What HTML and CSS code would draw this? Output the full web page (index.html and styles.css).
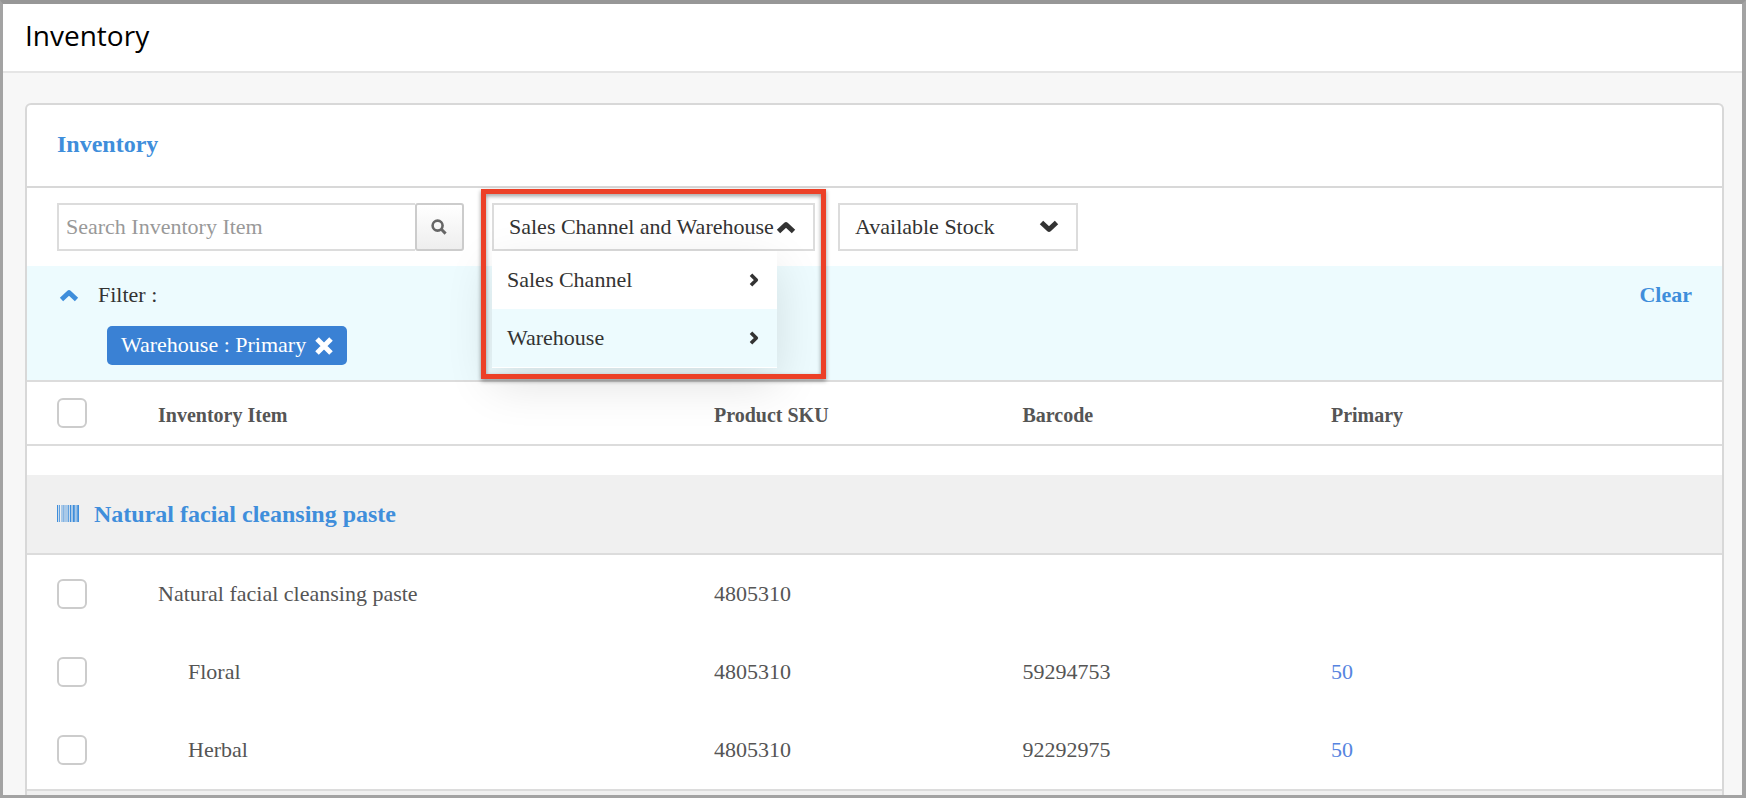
FILE: index.html
```html
<!DOCTYPE html>
<html lang="en">
<head>
<meta charset="utf-8">
<title>Inventory</title>
<link rel="stylesheet" href="styles.css">
</head>
<body>

<header class="pageHeader">
  <h1>Inventory</h1>
</header>

<main class="content">
<section class="card">

  <h2 class="cardTitle">Inventory</h2>

  <div class="toolbar">
    <form class="search">
      <input type="text" class="searchInput" placeholder="Search Inventory Item" aria-label="Search Inventory Item">
      <button type="button" class="searchButton" aria-label="Search">
        <svg width="16" height="16" viewBox="0 0 16 16"><circle cx="6.6" cy="6.6" r="5" fill="none" stroke="#666" stroke-width="2.6"/><path d="M10.3 10.3L14.6 14.6" stroke="#666" stroke-width="3"/></svg>
      </button>
    </form>

    <div class="dropdown">
      <button type="button" class="dropdownButton" aria-haspopup="true" aria-expanded="true">
        <span>Sales Channel and Warehouse</span>
        <svg width="20" height="14" viewBox="0 0 20 14"><path d="M2.5 11.5L10 4.5L17.5 11.5" fill="none" stroke="#333" stroke-width="5" stroke-linejoin="round"/></svg>
      </button>
      <div class="menu">
        <button type="button" class="menuItem">
          Sales Channel
          <svg width="10" height="14" viewBox="0 0 10 14"><path d="M2 1.7L7.3 7L2 12.3" fill="none" stroke="#333" stroke-width="3.6" stroke-linejoin="round"/></svg>
        </button>
        <button type="button" class="menuItem active">
          Warehouse
          <svg width="10" height="14" viewBox="0 0 10 14"><path d="M2 1.7L7.3 7L2 12.3" fill="none" stroke="#333" stroke-width="3.6" stroke-linejoin="round"/></svg>
        </button>
      </div>
      <div class="highlight"></div>
    </div>

    <div class="selectBox">
      <select aria-label="Stock">
        <option>Available Stock</option>
      </select>
      <svg width="20" height="14" viewBox="0 0 20 14"><path d="M2.5 2.5L10 9.5L17.5 2.5" fill="none" stroke="#333" stroke-width="5" stroke-linejoin="round"/></svg>
    </div>
  </div>

  <div class="filter">
    <div class="filterHead">
      <button type="button" class="filterToggle" aria-label="Hide filters">
        <svg width="20" height="14" viewBox="0 0 20 14"><path d="M2.5 11.5L10 4.5L17.5 11.5" fill="none" stroke="#3f8edb" stroke-width="4.8" stroke-linejoin="round"/></svg>
      </button>
      <span>Filter :</span>
      <a href="#" class="clear">Clear</a>
    </div>
    <div class="tag">
      <span>Warehouse : Primary</span>
      <button type="button" aria-label="Remove filter">
        <svg width="18" height="18" viewBox="0 0 18 18"><path d="M2 2L16 16M16 2L2 16" stroke="#fff" stroke-width="5"/></svg>
      </button>
    </div>
  </div>

  <table class="items">
    <colgroup>
      <col class="colCheck">
      <col class="colName">
      <col class="colData">
      <col class="colData">
      <col>
    </colgroup>
    <thead>
      <tr>
        <th><input type="checkbox" aria-label="Select all"></th>
        <th>Inventory Item</th>
        <th>Product SKU</th>
        <th>Barcode</th>
        <th>Primary</th>
      </tr>
    </thead>
    <tbody>
      <tr class="spacer"><td colspan="5"></td></tr>
      <tr class="group">
        <th colspan="5">
          <a href="#">
            <svg width="23" height="18" viewBox="0 0 23 18" fill="#3f8edb"><rect x="0" width="1.2" height="17"/><rect x="2.2" width=".8" height="17"/><rect x="4.6" width=".8" height="17"/><rect x="6.4" width="1" height="17"/><rect x="8.6" width=".8" height="17"/><rect x="10.6" width="1.2" height="17"/><rect x="12.8" width="1.2" height="17"/><rect x="14.6" width=".8" height="17"/><rect x="16" width="1.8" height="17"/><rect x="18.6" width=".9" height="17"/><rect x="20.2" width="1.8" height="17"/></svg>
            Natural facial cleansing paste
          </a>
        </th>
      </tr>
      <tr>
        <td><input type="checkbox" aria-label="Natural facial cleansing paste"></td>
        <td>Natural facial cleansing paste</td>
        <td>4805310</td>
        <td></td>
        <td></td>
      </tr>
      <tr>
        <td><input type="checkbox" aria-label="Floral"></td>
        <td class="variant">Floral</td>
        <td>4805310</td>
        <td>59294753</td>
        <td><a href="#">50</a></td>
      </tr>
      <tr>
        <td><input type="checkbox" aria-label="Herbal"></td>
        <td class="variant">Herbal</td>
        <td>4805310</td>
        <td>92292975</td>
        <td><a href="#">50</a></td>
      </tr>
    </tbody>
  </table>
  <div class="nextGroup"></div>

</section>
</main>

</body>
</html>
```
FILE: styles.css
```css
* {
  box-sizing: border-box;
}

body {
  margin: 0;
  height: 100vh;
  display: flex;
  flex-direction: column;
  overflow: hidden;
  border: 3px solid #a3a3a3;
  border-top: 4px solid #979797;
  border-right-width: 4px;
  background: #f7f7f7;
  color: #333;
  font-family: "Liberation Serif", "Times New Roman", serif;
  font-size: 22px;
  line-height: 26px;
}

button, input, select {
  font: inherit;
  color: inherit;
}

button {
  margin: 0;
  padding: 0;
  border: 0;
  background: none;
}

svg {
  display: block;
  flex: none;
}

a {
  color: #3f8edb;
  text-decoration: none;
}

.pageHeader {
  flex: none;
  padding: 12px 22px 17px;
  background: #fff;
  border-bottom: 2px solid #e5e5e5;
}

.pageHeader h1 {
  margin: 0;
  color: #000;
  font: 400 28px/38px "Open Sans", sans-serif;
}

.content {
  flex: 1;
  display: flex;
  min-height: 0;
  padding: 30px 18px 0 22px;
}

.card {
  flex: 1;
  display: flex;
  flex-direction: column;
  border: 2px solid #d8d8d8;
  border-bottom: 0;
  border-radius: 6px 6px 0 0;
  background: #fff;
}

.cardTitle {
  margin: 0;
  padding: 25px 30px 28px;
  border-bottom: 2px solid #d8d8d8;
  color: #3f8edb;
  font-size: 24px;
  line-height: 28px;
}

/* search and dropdowns */

.toolbar {
  display: flex;
  padding: 15px 30px;
}

.search {
  display: flex;
  margin-right: 28px;
}

.searchInput {
  width: 358px;
  height: 48px;
  padding: 0 7px;
  border: 2px solid #dcdcdc;
  border-right: 0;
  background: #fff;
}

.searchInput::placeholder {
  color: #999;
}

.searchButton {
  display: flex;
  align-items: center;
  justify-content: center;
  width: 49px;
  padding-right: 2px;
  border: 2px solid #ccc;
  border-radius: 3px;
  background: linear-gradient(#fff, #eee);
}

.dropdown {
  position: relative;
  width: 323px;
  margin-right: 23px;
}

.dropdownButton {
  display: flex;
  align-items: center;
  gap: 2px;
  width: 100%;
  height: 48px;
  padding: 0 15px 1px;
  border: 2px solid #dcdcdc;
  background: #fff;
  white-space: nowrap;
}

.menu {
  position: absolute;
  z-index: 1;
  top: 48px;
  left: 0;
  width: 285px;
  padding-bottom: 1px;
  background: #fff;
  box-shadow: 0 16px 48px rgba(0, 0, 0, 0.12);
}

.menuItem {
  display: flex;
  align-items: center;
  justify-content: space-between;
  width: 100%;
  height: 58px;
  padding: 0 18px 1px 15px;
}

.menuItem.active {
  background: #edfbfe;
}

.highlight {
  position: absolute;
  z-index: 2;
  top: -14px;
  left: -11px;
  right: -11px;
  height: 190px;
  border: 5px solid #ec4027;
  filter: drop-shadow(0 2px 2px rgba(0, 0, 0, 0.4));
  pointer-events: none;
}

.selectBox {
  position: relative;
  width: 240px;
}

.selectBox select {
  width: 100%;
  height: 48px;
  padding: 0 15px 1px;
  appearance: none;
  border: 2px solid #dcdcdc;
  border-radius: 0;
  background: #fff;
}

.selectBox svg {
  position: absolute;
  top: 17px;
  right: 19px;
  pointer-events: none;
}

/* active filters */

.filter {
  padding: 16px 30px 15px;
  border-bottom: 2px solid #dcdcdc;
  background: #edfbfe;
}

.filterHead {
  display: flex;
  align-items: center;
  margin-bottom: 18px;
}

.filterToggle {
  margin: 0 19px 0 2px;
}

.clear {
  margin-left: auto;
  font-weight: bold;
}

.tag {
  display: inline-flex;
  align-items: center;
  gap: 9px;
  height: 39px;
  margin-left: 50px;
  padding: 0 14px;
  border-radius: 5px;
  background: #3a81d4;
  color: #fff;
  vertical-align: top;
}

.tag span {
  padding-bottom: 2px;
}

/* inventory table */

.items {
  width: 100%;
  table-layout: fixed;
  border-spacing: 0;
  border-bottom: 2px solid #dcdcdc;
  color: #555;
}

.colCheck {
  width: 131px;
}

.colName {
  width: 32.8%;
}

.colData {
  width: 18.2%;
}

.items th, .items td {
  height: 78px;
  padding: 0;
  text-align: left;
}

.items thead th {
  height: 64px;
  border-bottom: 2px solid #dcdcdc;
  font-size: 20px;
}

.items thead th + th {
  padding-top: 3px;
}

.items .spacer td {
  height: 29px;
}

.items .group th {
  height: 80px;
  padding-left: 30px;
  border-bottom: 2px solid #dcdcdc;
  background: #f0f0f0;
  font-size: 24px;
}

.group a {
  display: flex;
  align-items: center;
  gap: 14px;
}

.items .variant {
  padding-left: 30px;
}

.items td a {
  color: #5684e0;
}

.items input {
  display: block;
  appearance: none;
  width: 30px;
  height: 30px;
  margin: 0 0 0 30px;
  border: 2px solid #ccc;
  border-radius: 6px;
  background: #fff;
}

.nextGroup {
  flex: 1;
  background: #f0f0f0;
}
```
